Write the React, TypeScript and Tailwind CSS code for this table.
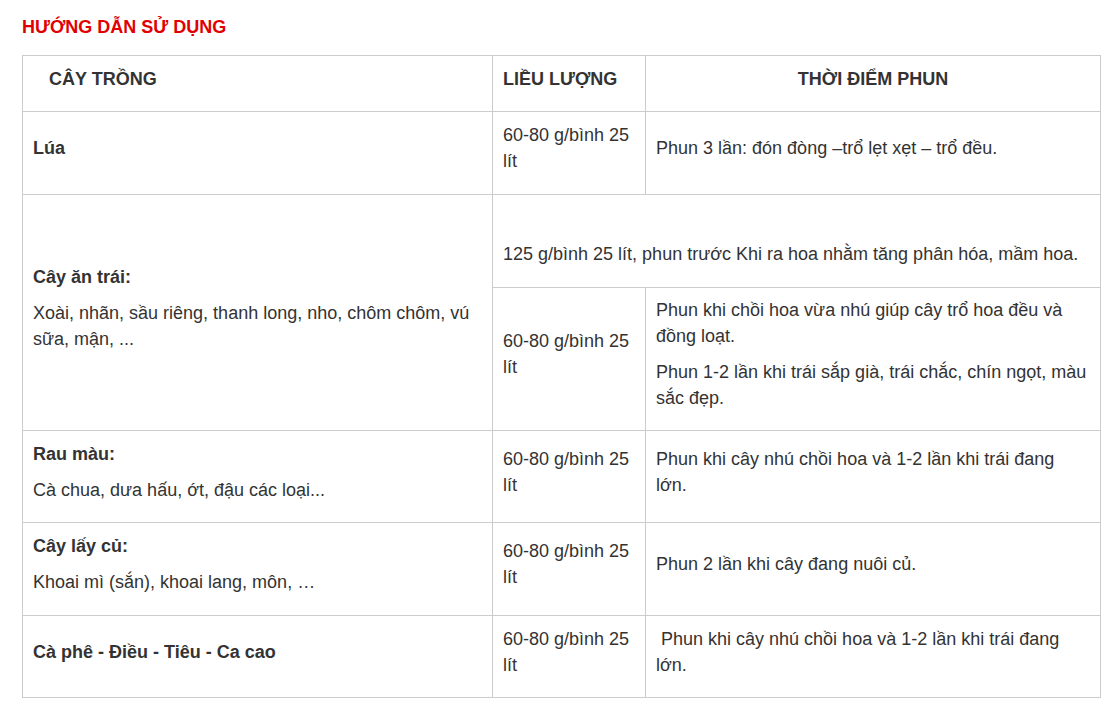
const cell = "border border-[#cccccc] px-[10px] py-[9px] align-middle";
const p = "mb-[10px]";

const Dose = () => (
  <p className={p}>
    60-80 g/bình 25 lít
  </p>
);

export default function App() {
  return (
    <div
      className="bg-white px-[22px] pt-[14px] text-[18px] leading-[26px] text-[#333333]"
      style={{ fontFamily: '"Liberation Sans", Arial, sans-serif' }}
    >
      <h2 className="font-bold text-[#e10000] mb-[15px]">HƯỚNG DẪN SỬ DỤNG</h2>
      <table className="w-[1078px] table-fixed border-collapse">
        <colgroup>
          <col className="w-[470px]" />
          <col className="w-[153px]" />
          <col className="w-[455px]" />
        </colgroup>
        <thead>
          <tr className="h-[56px]">
            <th className={`${cell} pl-[26px] text-left font-bold`}>
              <p className={p}>CÂY TRỒNG</p>
            </th>
            <th className={`${cell} text-left font-bold`}>
              <p className={p}>LIỀU LƯỢNG</p>
            </th>
            <th className={`${cell} text-center font-bold`}>
              <p className={p}>THỜI ĐIỂM PHUN</p>
            </th>
          </tr>
        </thead>
        <tbody>
          <tr className="h-[83px]">
            <td className={cell}>
              <p className={`${p} font-bold`}>Lúa</p>
            </td>
            <td className={cell}>
              <Dose />
            </td>
            <td className={cell}>
              <p className={p}>Phun 3 lần: đón đòng –trổ lẹt xẹt – trổ đều.</p>
            </td>
          </tr>

          {/* Cây ăn trái: two sub rows */}
          <tr className="h-[93px]">
            <td className={cell} rowSpan={2}>
              <p className={`${p} font-bold`}>Cây ăn trái:</p>
              <p className={p}>
                Xoài, nhãn, sầu riêng, thanh long, nho, chôm chôm, vú sữa, mận, ...
              </p>
            </td>
            <td className={cell} colSpan={2}>
              <p className={p}>&nbsp;</p>
              <p className={p}>
                125 g/bình 25 lít, phun trước Khi ra hoa nhằm tăng phân hóa, mầm hoa.
              </p>
            </td>
          </tr>
          <tr className="h-[143px]">
            <td className={cell}>
              <Dose />
            </td>
            <td className={cell}>
              <p className={p}>Phun khi chồi hoa vừa nhú giúp cây trổ hoa đều và đồng loạt.</p>
              <p className={p}>
                Phun 1-2 lần khi trái sắp già, trái chắc, chín ngọt, màu sắc đẹp.
              </p>
            </td>
          </tr>

          <tr className="h-[92px]">
            <td className={cell}>
              <p className={`${p} font-bold`}>Rau màu:</p>
              <p className={p}>Cà chua, dưa hấu, ớt, đậu các loại...</p>
            </td>
            <td className={cell}>
              <Dose />
            </td>
            <td className={cell}>
              <p className={p}>Phun khi cây nhú chồi hoa và 1-2 lần khi trái đang lớn.</p>
            </td>
          </tr>

          <tr className="h-[93px]">
            <td className={cell}>
              <p className={`${p} font-bold`}>Cây lấy củ:</p>
              <p className={p}>Khoai mì (sắn), khoai lang, môn, …</p>
            </td>
            <td className={cell}>
              <Dose />
            </td>
            <td className={cell}>
              <p className={p}>Phun 2 lần khi cây đang nuôi củ.</p>
            </td>
          </tr>

          <tr className="h-[82px]">
            <td className={cell}>
              <p className={`${p} font-bold`}>Cà phê - Điều - Tiêu - Ca cao</p>
            </td>
            <td className={cell}>
              <Dose />
            </td>
            <td className={cell}>
              <p className={p}>&nbsp;Phun khi cây nhú chồi hoa và 1-2 lần khi trái đang lớn.</p>
            </td>
          </tr>
        </tbody>
      </table>
      <div className="h-[7px]" />
    </div>
  );
}
